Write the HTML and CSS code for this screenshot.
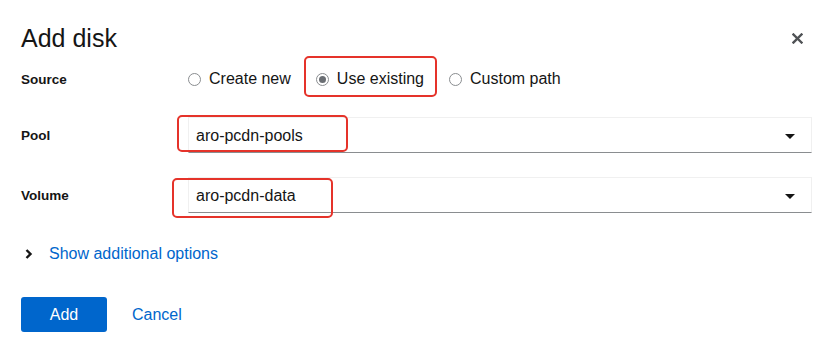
FILE: index.html
```html
<!DOCTYPE html>
<html lang="en">
<head>
  <meta charset="UTF-8" />
  <title>Add disk</title>
  <link rel="stylesheet" href="styles.css">
</head>
<body>

  <div class="modal">
    <header class="modal-header">
      <h1>Add disk</h1>
      <button class="close" aria-label="Close">
        <svg width="11" height="11" viewBox="0 0 11 11"><path d="M1.5 1.5 L9.5 9.5 M9.5 1.5 L1.5 9.5" stroke="#4f5255" stroke-width="2.4" stroke-linecap="square"/></svg>
      </button>
    </header>

    <form class="disk-form">
      <div class="form-row">
        <label class="field-label">Source</label>
        <div class="radios">
          <label class="radio"><input type="radio" name="source" /> Create new</label>
          <label class="radio"><input type="radio" name="source" checked /> Use existing</label>
          <label class="radio"><input type="radio" name="source" /> Custom path</label>
        </div>
      </div>

      <div class="form-row row-pool">
        <label class="field-label">Pool</label>
        <div class="select">
          <span>aro-pcdn-pools</span>
          <span class="caret"></span>
        </div>
      </div>

      <div class="form-row row-volume">
        <label class="field-label">Volume</label>
        <div class="select">
          <span>aro-pcdn-data</span>
          <span class="caret"></span>
        </div>
      </div>
    </form>

    <a class="expand" href="#">
      <svg width="8" height="10" viewBox="0 0 8 10"><path d="M1.5 1 L5.5 5 L1.5 9" fill="none" stroke="#151515" stroke-width="2.4"/></svg>
      <span>Show additional options</span>
    </a>

    <footer class="modal-footer">
      <button class="btn-primary">Add</button>
      <a class="btn-link" href="#">Cancel</a>
    </footer>
  </div>

  <div class="mark mark-source"></div>
  <div class="mark mark-pool"></div>
  <div class="mark mark-volume"></div>

</body>
</html>
```

FILE: styles.css
```css
:root {
  --text: #151515;
  --blue: #0066cc;
  --border: #f0f0f0;
  --border-bottom: #8a8d90;
  --mark: #e5332a;
}

* {
  box-sizing: border-box;
  margin: 0;
  padding: 0;
}

body {
  position: relative;
  width: 834px;
  height: 354px;
  background: #fff;
  color: var(--text);
  font-family: 'Liberation Sans', Arial, sans-serif;
  font-size: 16px;
  overflow: hidden;
}

.modal {
  padding: 18px 22px 0 21px;
}

.modal-header {
  display: flex;
  align-items: center;
  justify-content: space-between;
  height: 40px;
}

.modal-header h1 {
  font-size: 25px;
  font-weight: 400;
  line-height: 40px;
}

.close {
  background: none;
  border: none;
  width: 11px;
  height: 11px;
  margin-right: 9px;
  display: flex;
}

.disk-form {
  display: flex;
  flex-direction: column;
  margin-top: 3px;
}

.form-row {
  display: grid;
  grid-template-columns: 167px 1fr;
  align-items: center;
  height: 36px;
}

.row-pool {
  margin-top: 20px;
}

.row-volume {
  margin-top: 24px;
}

.field-label {
  font-size: 13.5px;
  font-weight: 700;
}

.radios {
  display: flex;
  align-items: center;
  gap: 25px;
}

.radio {
  display: flex;
  align-items: center;
  gap: 8px;
}

.radio input {
  appearance: none;
  width: 13px;
  height: 13px;
  border: 1px solid var(--border-bottom);
  border-radius: 50%;
  display: grid;
  place-items: center;
}

.radio input:checked::after {
  content: '';
  width: 7px;
  height: 7px;
  border-radius: 50%;
  background: #6a6e73;
}

.select {
  display: flex;
  align-items: center;
  justify-content: space-between;
  height: 36px;
  padding: 2px 16px 0 7px;
  border: 1px solid var(--border);
  border-bottom-color: var(--border-bottom);
}

.caret {
  width: 0;
  height: 0;
  border-left: 5px solid transparent;
  border-right: 5px solid transparent;
  border-top: 5px solid var(--text);
}

.expand {
  display: flex;
  align-items: center;
  gap: 16px;
  margin-top: 29px;
  padding-left: 4px;
  line-height: 24px;
  color: var(--blue);
  text-decoration: none;
}

.modal-footer {
  display: flex;
  align-items: center;
  gap: 25px;
  margin-top: 31px;
}

.btn-primary {
  width: 86px;
  height: 35px;
  background: var(--blue);
  color: #fff;
  border: none;
  border-radius: 3px;
  font-family: inherit;
  font-size: 16px;
}

.btn-link {
  color: var(--blue);
  text-decoration: none;
}

/* red annotation boxes drawn over the form */
.mark {
  position: absolute;
  border: 2px solid var(--mark);
  border-radius: 5px;
}

.mark-source {
  left: 304px;
  top: 56px;
  width: 133px;
  height: 41px;
}

.mark-pool {
  left: 177px;
  top: 115px;
  width: 171px;
  height: 37px;
}

.mark-volume {
  left: 172px;
  top: 178px;
  width: 161px;
  height: 40px;
}
```
